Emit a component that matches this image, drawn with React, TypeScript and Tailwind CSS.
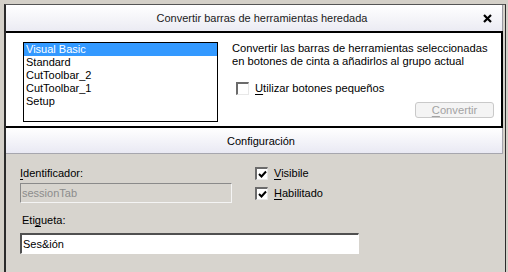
import { ReactNode } from 'react'

const toolbars = ['Visual Basic', 'Standard', 'CutToolbar_2', 'CutToolbar_1', 'Setup']

const Key = ({ children }: { children: ReactNode }) => <span className="underline underline-offset-2">{children}</span>

const CheckBox = ({ checked }: { checked?: boolean }) => (
    <span className="flex h-[13px] w-[13px] shrink-0 items-center justify-center border-t-2 border-l-2 border-b border-r border-t-[#6b6b6b] border-l-[#6b6b6b] border-b-[#e8e8e8] border-r-[#e8e8e8] bg-white">
        {checked && (
            <svg width="9" height="9" viewBox="0 0 9 9">
                <path d="M1 4 L3.5 6.5 L8 1.5" fill="none" stroke="#000" strokeWidth="2" />
            </svg>
        )}
    </span>
)

const App = () => {
    return (
        <div className="h-[272px] w-[508px] overflow-hidden bg-[#d4d0c8] pl-1 pt-1 pr-[2px] font-['Liberation_Sans',sans-serif] text-[11px] text-black">
            <div className="flex h-full flex-col border-l-2 border-t border-r border-[#2b2b2b] border-t-[#555]">
                <div className="mr-[2px] grid h-[26px] grid-cols-[1fr_auto_1fr] items-center border-r border-[#9a9aa2] bg-gradient-to-b from-white to-[#ebebf3]">
                    <span />
                    <span className="pl-[16px] text-[#1a1a1a]">Convertir barras de herramientas heredada</span>
                    <span className="flex justify-end pr-[10px]">
                        <svg width="9" height="9" viewBox="0 0 9 9">
                            <path d="M1 1 L8 8 M8 1 L1 8" stroke="#000" strokeWidth="2.2" />
                        </svg>
                    </span>
                </div>

                <div className="mr-[2px] flex h-[97px] border-y-2 border-r-2 border-black bg-white pl-[17px] pt-[9px]">
                    <div className="h-[80px] w-[195px] border border-black">
                        {toolbars.map((name, i) => (
                            <div key={name} className={`h-[13px] px-[2px] leading-[13px] ${i === 0 ? 'bg-[#3399ff] text-white' : ''}`}>
                                {name}
                            </div>
                        ))}
                    </div>
                    <div className="ml-[14px] flex w-[262px] flex-col text-[11.2px]">
                        <p className="leading-[13px]">
                            Convertir las barras de herramientas seleccionadas
                            <br />
                            en botones de cinta a añadirlos al grupo actual
                        </p>
                        <label className="ml-[4px] mt-[14px] flex items-center gap-[6px] leading-[13px]">
                            <CheckBox />
                            <span>
                                <Key>U</Key>tilizar botones pequeños
                            </span>
                        </label>
                        <button className="mt-[7px] h-[16px] w-[79px] self-end rounded-[3px] border border-[#c9c9c9] bg-[#f4f4f4] leading-[14px] text-[#a3a3a3]">
                            <Key>C</Key>onvertir
                        </button>
                    </div>
                </div>

                <div className="mr-[2px] flex h-[26px] items-center justify-center border-b border-r border-[#a6a6ae] bg-gradient-to-b from-white to-[#e9e9f3] pl-[14px] pt-[1px]">
                    Configuración
                </div>

                <div className="flex-1 bg-[#d7d4ce] pl-[14px] pt-[13px]">
                    <div className="flex">
                        <div className="flex w-[212px] flex-col">
                            <span className="leading-[13px]">
                                <Key>I</Key>dentificador:
                            </span>
                            <div className="mt-[3px] flex h-[20px] items-center border border-t-[#8a8a8a] border-l-[#8a8a8a] border-b-[#f4f4f4] border-r-[#f4f4f4] bg-[#d7d4ce] px-[1px] text-[#8c8c8c]">
                                sessionTab
                            </div>
                        </div>
                        <div className="ml-[23px] flex flex-col gap-[7px]">
                            <label className="flex items-center gap-[6px] leading-[13px]">
                                <CheckBox checked />
                                <span>
                                    <Key>V</Key>isibile
                                </span>
                            </label>
                            <label className="flex items-center gap-[6px] leading-[13px]">
                                <CheckBox checked />
                                <span>
                                    <Key>H</Key>abilitado
                                </span>
                            </label>
                        </div>
                    </div>
                    <span className="ml-[2px] mt-[11px] block leading-[13px]">
                        Eti<Key>g</Key>ueta:
                    </span>
                    <div className="mt-[6px] flex h-[21px] w-[339px] items-center border-t-2 border-l-2 border-b border-r border-t-[#505050] border-l-[#505050] border-b-white border-r-white bg-white px-[1px]">
                        Ses&amp;ión
                    </div>
                </div>
            </div>
        </div>
    )
}

export default App
